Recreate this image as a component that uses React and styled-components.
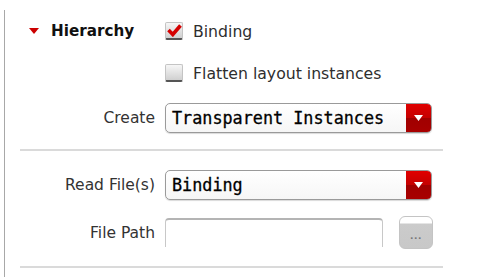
import React from "react";
import styled, { createGlobalStyle } from "styled-components";

const Global = createGlobalStyle`
body {
  margin: 0;
  background: #fff;
  font-family: "DejaVu Sans", Verdana, sans-serif;
}
`;

const App = () => {
    return (
        <>
        <Global/>
        <Panel>
            <Row h={42} top={10}>
                <Header>
                    <Arrow/>
                    <Title>Hierarchy</Title>
                </Header>
                <Check checked={true} label="Binding"/>
            </Row>
            <Row h={42}>
                <Label></Label>
                <Check checked={false} label="Flatten layout instances"/>
            </Row>
            <Row h={48}>
                <Label>Create</Label>
                <Select value="Transparent Instances"/>
            </Row>
            <Sep top={7}/>
            <Row h={46} top={11}>
                <Label>Read File(s)</Label>
                <Select value="Binding"/>
            </Row>
            <Row h={49}>
                <Label>File Path</Label>
                <PathField/>
                <BrowseBtn>
                    <Dots>...</Dots>
                </BrowseBtn>
            </Row>
            <Sep top={9}/>
        </Panel>
        </>
    )
}

const Check = ({ checked, label }) => (
    <CheckWrap>
        <Box>
            {checked && (
                <svg width="15" height="13" viewBox="0 0 15 13">
                    <path d="M1.5 6 L5.8 10.5 L13.5 1.5" fill="none" stroke="#d40000" strokeWidth="3.6" strokeLinejoin="miter"/>
                </svg>
            )}
        </Box>
        <CheckText>{label}</CheckText>
    </CheckWrap>
);

const Select = ({ value }) => (
    <SelectBox>
        <SelectText>{value}</SelectText>
        <DropBtn>
            <svg width="9" height="6" viewBox="0 0 9 6">
                <path d="M0 0 H9 L4.5 6 Z" fill="#fff"/>
            </svg>
        </DropBtn>
    </SelectBox>
);

const Panel = styled.div`
margin-left: 4px;
width: 460px;
height: 268px;
border-left: 1px solid #a8a8a8;
box-sizing: border-box;
`;

const Row = styled.div`
display: flex;
align-items: center;
height: ${p => p.h}px;
margin-top: ${p => p.top || 0}px;
`;

const Label = styled.div`
width: 150px;
margin-right: 10px;
text-align: right;
font-size: 15.5px;
color: #333;
flex-shrink: 0;
`;

const Header = styled.div`
width: 150px;
margin-right: 10px;
display: flex;
align-items: center;
flex-shrink: 0;
`;

const Arrow = styled.span`
margin-left: 24px;
width: 0;
height: 0;
border-left: 5.5px solid transparent;
border-right: 5.5px solid transparent;
border-top: 6px solid #cc0000;
`;

const Title = styled.span`
margin-left: 12px;
font-weight: bold;
font-size: 15.2px;
color: #111;
`;

const CheckWrap = styled.div`
display: flex;
align-items: center;
`;

const Box = styled.div`
width: 18px;
height: 18px;
box-sizing: border-box;
border: 1px solid #c4c4c4;
border-bottom: 2px solid #555;
border-radius: 2px;
background: linear-gradient(#f6f6f6, #d0d0d0);
display: flex;
align-items: center;
justify-content: center;
`;

const CheckText = styled.span`
margin-left: 10px;
font-size: 15.7px;
color: #2e2e2e;
`;

const SelectBox = styled.div`
width: 267px;
height: 30px;
box-sizing: border-box;
border: 1px solid #9a9a9a;
border-radius: 5px;
display: flex;
overflow: hidden;
background: linear-gradient(#fff, #f6f6f6);
box-shadow: 0 1px 1px rgba(0,0,0,0.15);
`;

const SelectText = styled.div`
flex: 1;
display: flex;
align-items: center;
padding-left: 6px;
font-family: "DejaVu Sans Mono", monospace;
font-size: 16.8px;
color: #000;
-webkit-text-stroke: 0.3px #000;
`;

const DropBtn = styled.div`
width: 25px;
display: flex;
align-items: center;
justify-content: center;
background: linear-gradient(#e00000, #c40000 50%, #a00000 51%, #a80000);
`;

const PathField = styled.div`
width: 218px;
height: 29px;
box-sizing: border-box;
border: 1px solid #c8c8c8;
border-top: 2px solid #b4b4b4;
border-bottom: none;
border-radius: 4px 4px 0 0;
background: #fff;
align-self: flex-start;
margin-top: 10px;
`;

const BrowseBtn = styled.div`
margin-left: 16px;
width: 34px;
height: 33px;
box-sizing: border-box;
border: 1px solid #c4c4c4;
border-radius: 6px;
background: linear-gradient(#fff 0, #fff 6px, #cbcbcb 7px, #c8c8c8);
display: flex;
align-items: center;
justify-content: center;
`;

const Dots = styled.span`
margin-top: 6px;
font-size: 9px;
font-weight: bold;
color: #777;
letter-spacing: 0.5px;
`;

const Sep = styled.div`
margin-top: ${p => p.top}px;
margin-left: 15px;
width: 423px;
height: 2px;
background: #dadada;
`;

export default App;
